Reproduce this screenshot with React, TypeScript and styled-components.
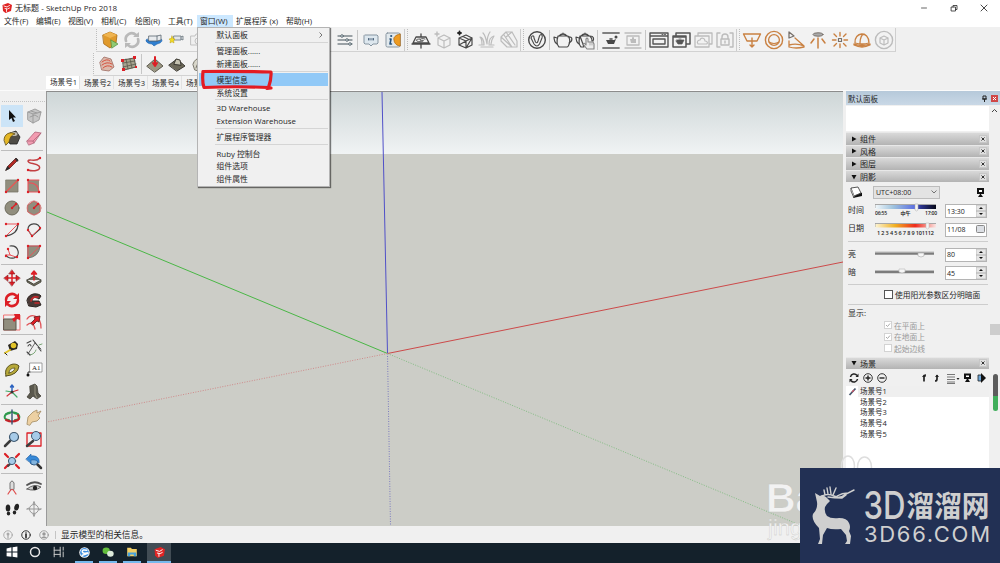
import React from "react";
import styled, { createGlobalStyle } from "styled-components";

const Global = createGlobalStyle`
  * { box-sizing: border-box; }
  html, body { margin: 0; padding: 0; }
  body { overflow: hidden; font-family: "Open Sans", "Noto Sans CJK SC", sans-serif; font-size: 7.85px; color: #262626; }
  svg { display: block; }
`;

const Window = styled.div`
  position: relative;
  width: 1000px;
  height: 563px;
  display: flex;
  flex-direction: column;
  background: #f0f0f0;
  overflow: hidden;
`;
const TitleBar = styled.header`
  height: 15px;
  background: #fff;
  display: flex;
  align-items: center;
  padding: 0 11px 0 2px;
  font-size: 8px;
  gap: 3px;
`;
const TitleText = styled.span`
  flex: 1;
  letter-spacing: 0.03px;
  white-space: nowrap;
`;
const Controls = styled.div`
  display: flex;
  gap: 20px;
`;
const MenuBar = styled.nav`
  height: 13px;
  background: linear-gradient(#fff 12px, #f0f0f0 12px);
  display: flex;
  padding-left: 1px;
`;
const MenuEntry = styled.span<{ $w: number; $open?: boolean }>`
  width: ${(p) => p.$w}px;
  flex: none;
  height: 12px;
  line-height: 13px;
  padding-left: 3px;
  white-space: nowrap;
  background: ${(p) => (p.$open ? "#cce8ff" : "transparent")};
`;
const ToolZone = styled.div`
  height: 48px;
  display: flex;
  flex-direction: column;
  align-items: flex-start;
`;
const ToolStrip = styled.div<{ $left: number; $w: number; $h: number }>`
  margin-left: ${(p) => p.$left}px;
  width: ${(p) => p.$w}px;
  height: ${(p) => p.$h}px;
  display: flex;
  align-items: center;
  border-right: 1px solid #cfcfcf;
  border-bottom: 1px solid #d2d2d2;
  background: #f2f2f2;
`;
const Slot = styled.span`
  width: 22px;
  height: 22px;
  flex: none;
  display: flex;
  align-items: center;
  justify-content: center;
`;
const Divider = styled.i`
  width: 4px;
  height: 20px;
  flex: none;
  background: linear-gradient(#c6c6c6, #c6c6c6) 1px 0 / 1px 100% no-repeat;
`;
const Grip = styled.i<{ $w: number; $edge?: boolean }>`
  width: ${(p) => p.$w}px;
  height: 22px;
  flex: none;
  border-left: ${(p) => (p.$edge ? "1px solid #cccccc" : "0")};
  background: repeating-linear-gradient(#bdbdbd 0 1px, transparent 1px 2px) ${(p) => (p.$edge ? 2 : 0)}px 0 / 1px 100% no-repeat;
`;
const Spacer = styled.i<{ $w: number }>`
  width: ${(p) => p.$w}px;
  flex: none;
`;
const SceneTabs = styled.div`
  height: 15px;
  display: flex;
  padding-left: 46px;
  border-bottom: 1px solid #fbfbfb;
`;
const SceneTab = styled.span<{ $on?: boolean }>`
  width: 34px;
  height: 13px;
  padding: ${(p) => (p.$on ? 0 : 1)}px 0 0 4px;
  line-height: 12px;
  font-size: 7.6px;
  white-space: nowrap;
  border-right: 1px solid #e2e2e2;
  background: ${(p) => (p.$on ? "#fff" : "#f3f3f3")};
`;
const Body = styled.main`
  height: 435px;
  display: flex;
`;
const Palette = styled.aside`
  width: 46px;
  padding: 10px 0 0 1px;
  display: flex;
  flex-direction: column;
`;
const PaletteGrip = styled.i`
  height: 4px;
  margin: 0 1px;
  background: repeating-linear-gradient(90deg, #c4c4c4 0 1px, transparent 1px 2px) 0 0 / 100% 1px no-repeat;
`;
const PaletteGroup = styled.div`
  display: grid;
  grid-template-columns: 22px 22px;
  border-bottom: 1px solid #bdbdbd;
  padding-bottom: 1px;
  margin-bottom: 2px;
  width: 42px;
  &:nth-child(5) { margin-bottom: 1px; }
  &:last-child { border-bottom: 0; }
`;
const PaletteTool = styled.span<{ $on?: boolean }>`
  height: 22px;
  width: 22px;
  display: flex;
  align-items: center;
  justify-content: center;
  background: ${(p) => (p.$on ? "#cce4f7" : "transparent")};
`;
const Viewport = styled.section`
  width: 797px;
  height: 435px;
  border-left: 1px solid #9a9a9a;
  border-top: 1px solid #8c8c8c;
  overflow: hidden;
  background: linear-gradient(#ced6d7, #f0f3f4 62px, #cccdc7 62px);
`;
const Tray = styled.aside`
  width: 146px;
  padding-left: 3px;
  display: flex;
  flex-direction: column;
`;
const TrayTitle = styled.div`
  height: 14px;
  width: 154px;
  display: flex;
  align-items: center;
  padding: 0 2px;
  gap: 4px;
  background: linear-gradient(#b6c9da, #c9d8e6);
  font-size: 7.5px;
`;
const Fill = styled.span`
  flex: 1;
`;
const BlankBox = styled.div`
  height: 25px;
  margin: 1px 0;
  background: #fff;
`;
const Section = styled.div`
  height: 12.6px;
  flex: none;
  display: flex;
  align-items: center;
  padding: 0 2px 0 5px;
  font-size: 8px;
  background: linear-gradient(#d9d9d9, #b3b3b3);
  border-top: 1px solid #e8e8e8;
`;
const Arrow = styled.span<{ $open?: boolean }>`
  width: 9px;
  svg { transform: rotate(${(p) => (p.$open ? 90 : 0)}deg); }
`;
const CloseBox = styled.span`
  width: 8px;
  height: 8px;
  background: #e0e0e0;
  border: 1px solid #c7c7c7;
  display: flex;
  align-items: center;
  justify-content: center;
`;
const Row = styled.div<{ $h: number; $line?: boolean }>`
  height: ${(p) => p.$h}px;
  flex: none;
  margin: 0 1px 0 2px;
  display: flex;
  align-items: center;
  font-size: 8px;
  border-bottom: ${(p) => (p.$line ? "1px solid #cdcdcd" : "0")};
`;
const RowLabel = styled.span<{ $w: number; $lift?: number }>`
  width: ${(p) => p.$w}px;
  padding-bottom: ${(p) => p.$lift ?? 0}px;
  flex: none;
  white-space: nowrap;
`;
const Select = styled.span`
  width: 67px;
  height: 13px;
  background: #e3e3e3;
  border: 1px solid #bcbcbc;
  display: flex;
  align-items: center;
  justify-content: space-between;
  padding: 0 2px;
  font-size: 7px;
`;
const Slider = styled.div<{ $lift?: number }>`
  width: 70px;
  padding-bottom: ${(p) => p.$lift ?? 0}px;
  flex: none;
`;
const Field = styled.span`
  width: 42px;
  height: 14px;
  flex: none;
  background: #fff;
  border: 1px solid #b4b4b4;
  display: flex;
  align-items: center;
  justify-content: space-between;
  padding-left: 1px;
  font-size: 7px;
  color: #1a1a1a;
`;
const Check = styled.span<{ $dim?: boolean }>`
  width: ${(p) => (p.$dim ? 8 : 9)}px;
  height: ${(p) => (p.$dim ? 8 : 9)}px;
  margin: 0 2px 0 36px;
  flex: none;
  background: #fff;
  border: 1px solid ${(p) => (p.$dim ? "#d3d3d3" : "#555")};
`;
const CheckText = styled.span<{ $dim?: boolean }>`
  color: ${(p) => (p.$dim ? "#9a9a9a" : "#262626")};
  font-size: 7.75px;
  white-space: nowrap;
`;
const SceneList = styled.div`
  flex: 1;
  background: #fff;
`;
const SceneItem = styled.div<{ $on?: boolean }>`
  height: 10.85px;
  margin-left: 12px;
  padding-left: 2px;
  line-height: 10.8px;
  font-size: 7.5px;
  background: ${(p) => (p.$on ? "#efefef" : "#fff")};
  position: relative;
  svg { position: absolute; left: -10px; top: 1px; }
`;
const ScrollRail = styled.div`
  width: 11px;
  padding-top: 14px;
  display: flex;
  flex-direction: column;
  align-items: center;
`;
const ScrollThumb = styled.i`
  width: 10px;
  height: 11px;
  background: #cdcdcd;
  margin-top: 207px;
`;
const LevelPill = styled.i`
  width: 5px;
  height: 37px;
  margin: 39px 0 0 2px;
  border-radius: 3px;
  background: linear-gradient(#5c5c5c 22px, #3fae5a 22px);
`;
const StatusBar = styled.footer`
  height: 17px;
  display: flex;
  align-items: center;
  padding-left: 3px;
  gap: 8px;
`;
const StatusText = styled.span`
  border-left: 1px solid #c4c4c4;
  line-height: 8px;
  padding-left: 5px;
  margin-left: -2px;
  font-size: 8.7px;
`;
const TaskBar = styled.div`
  height: 20px;
  background: #14212b;
  display: flex;
`;
const Task = styled.span<{ $run?: boolean; $on?: boolean }>`
  width: ${(p) => (p.$on ? 24 : p.$run ? 18 : 23.5)}px;
  margin-right: ${(p) => (p.$run && !p.$on ? 6 : 0)}px;
  display: flex;
  align-items: center;
  justify-content: center;
  background: ${(p) => (p.$on ? "#414c54" : "transparent")};
  border-bottom: 2px solid ${(p) => (p.$run ? "#76b9ed" : "transparent")};
`;
const DropMenu = styled.div`
  position: absolute;
  left: 197px;
  top: 27px;
  width: 133px;
  height: 160px;
  background: #f0f0f0;
  border: 1px solid #b4b4b4;
  box-shadow: 1px 1px 1px rgba(0, 0, 0, 0.5);
  padding: 0.4px 1px 0;
`;
const MenuRow = styled.div<{ $hot?: boolean }>`
  height: 12.5px;
  padding: 0 5px 0 17.5px;
  display: flex;
  align-items: center;
  justify-content: space-between;
  white-space: nowrap;
  background: ${(p) => (p.$hot ? "#91c9f7" : "transparent")};
`;
const MenuRule = styled.div`
  height: 3.7px;
  margin: 0 0 0 16px;
  background: linear-gradient(#d5d5d5, #d5d5d5) 0 1px / 100% 1px no-repeat;
`;
const Marker = styled.svg`
  position: absolute;
  left: 196px;
  top: 66px;
`;
const Watermark = styled.svg`
  position: absolute;
  left: 760px;
  top: 450px;
`;
const Badge = styled.div`
  position: absolute;
  left: 800px;
  top: 468px;
  width: 200px;
  height: 95px;
  background: #223054;
`;

/* Every drawing uses a 20x20 field centred on the origin. */
const Ico = ({ children, s = 20 }: { children: React.ReactNode; s?: number }) => (
  <svg width={s} height={s} viewBox="-10 -10 20 20" fill="none" strokeLinecap="round" strokeLinejoin="round">
    {children}
  </svg>
);

const dark = "#484848";
const mute = "#bcbcbc";
const org = "#c98142";
const red = "#dc1f26";
const taupe = "#918e7e";

const SketchLogo = ({ s = 10 }: { s?: number }) => (
  <Ico s={s}>
    <path d="M-9-6 2-10 10-6 8 6-3 10-8 6Z" fill="#e02424" />
    <path d="M-6-4 0-2 5-5M-4 1 1 2 5 0M-1 2V7" stroke="#fff" strokeWidth="1.700" />
  </Ico>
);

const strip = {
  box: <><path d="M-7-5 0-8 7-5 6 3 0 8-6 4Z" fill="#e09a2c" stroke="#a8680f" strokeWidth=".8" /><path d="M-7-5 0-2 7-5 0-8Z" fill="#efb450" /><path d="M1 0 8 4 2 8Z" fill="#8fca74" stroke="#4d8f3d" strokeWidth=".7" /></>,
  refresh: <><path d="M-6 1A6 6 0 0 1 4-5M6-1A6 6 0 0 1-4 5" stroke="#b9b9b9" strokeWidth="2.600" /><path d="M1-3H7V-8ZM-1 3H-7V8Z" fill="#b9b9b9" /></>,
  orbitCloud: <><path d="M-7-1C-10 1-6 4-2 4L0 6 3 4C8 3 9 0 7-1L4 1H-5Z" fill="#2f7fd0" stroke="#1f62aa" strokeWidth=".6" /><path d="M-5-4H3L7-5V0L3 1H-5Z" fill="#e8ebee" stroke="#59646e" strokeWidth=".8" /><path d="M3-4V1" stroke="#59646e" strokeWidth=".8" /></>,
  star: <><path d="M-2-4H5V0H-2ZM5-3 7-4V0L5-1" fill="#e3e6e9" stroke="#68737c" strokeWidth=".8" /><path d="M-4-4-3-1.500-1-1-2.400.6-2 3-4 1.800-6 3-5.600.6-7-1-5-1.500Z" fill="#f3dc22" stroke="#bb9c10" strokeWidth=".5" /></>,
  camera: <><path d="M-7-4H-3L-2-6H3L4-4H7V5H-7Z" fill="#f0f0f0" stroke="#c2c2c2" /><circle r="3" cy="1" stroke="#c2c2c2" /></>,
  sliders: <><path d="M-7-4H7M-7 0H7M-7 4H7" stroke="#7d878c" strokeWidth="1.300" /><g fill="#eef3f5" stroke="#55646c" strokeWidth=".9"><circle cx="-3" cy="-4" r="1.300" /><circle cx="2" cy="0" r="1.300" /><circle cx="5" cy="4" r="1.300" /></g></>,
  chat: <><path d="M-6-5H6L7-4V3L6 4H2L0 6-2 4H-6L-7 3V-4Z" fill="#dde7ee" stroke="#8695a1" /><path d="M-2.500-1.500V0M-1-1.500V0M1-1.500V0M2.500-1.500V0" stroke="#4e657c" strokeWidth="1" /></>,
  info: <><rect x="-7" y="-7" width="14" height="14" rx="1.500" fill="#e2e9ed" stroke="#8a97a2" /><path d="M7-6C2-5 0-2 1 0 1 3 4 6 7 6Z" fill="#ed9b22" stroke="#a9640b" strokeWidth=".7" /><path d="M-3-1H-2L-3 4H-1.500" stroke="#26527d" strokeWidth="1.600" /><circle cx="-1.800" cy="-4" r="1.100" fill="#26527d" /></>,
  plane: <><path d="M0-6V-3M0 4V8M-9 4H9M-5-3H5L8 3H-8Z" stroke={dark} strokeWidth="1.300" /><path d="M4-1C1-2-1-1-1 0S4 0 2 1-2 2-4 1-4-1-1-1" stroke={dark} strokeWidth=".9" /></>,
  cubePlus: <><path d="M-5-2 1-5 7-2V5L1 8-5 5ZM-5-2 1 1 7-2M1 1V8" stroke={mute} strokeWidth="1.200" /><path d="M-6-8V-4M-8-6H-4" stroke={mute} strokeWidth="1.400" /></>,
  cubeWire: <><path d="M-6-2 1-5 7-2V5L1 8-6 5ZM-6-2 1 1 7-2M1 1V8M-6 5 1 1M1 8 7-2M-2-3.500 4-.5" stroke={dark} strokeWidth="1.200" /><path d="M-5.500-8.500V-5.500M-7-7H-4" stroke="#222" strokeWidth="1.800" /></>,
  grass: <><path d="M-8 5H-3M2 5H7M-6 7H6M-3 5C-3 0-5-3-7-3-5-1-5 2-5 4M0 4C-1-2-3-6-4-7M0 4C0 0 0-4 3-8M2 4C2 0 4-3 7-4 5-1 4 1 4 4" stroke={mute} strokeWidth="1.200" /></>,
  clipBox: <><path d="M-8-3-3-8 3-8 8 1V7H3ZM-8-3V1L-2 7H3M-3-8 6 5M3-8-3-3M-5-5 3 7" stroke={mute} strokeWidth="1.200" /></>,
  vray: <><circle r="8.300" stroke={dark} strokeWidth="1.400" /><path d="M-6-2C-5-5-3-5-3-2L-1.500 2Q0 4 1 1L2.500-4C4-7 6-5 5-2L2.500 4Q0 8-3 4Z" stroke={dark} strokeWidth="1.100" /></>,
  teapot: <><path d="M-5-4H5C9 1 5 7 4 7H-4C-5 6-7 3-5-4ZM-6 4C-9 2-9-1-9-3L-6-2M5-3C10-4 10 1 6 3M-4-4Q0-8 4-4M0-6V-7" stroke={dark} strokeWidth="1.200" /></>,
  teapotHand: <><path d="M-5-4H5C7-2 7 0 7 1M-1 7H-4C-5 6-7 3-5-4ZM-6 4C-9 2-9-1-9-3L-6-2M5-4C9-4 9-1 8 1M-4-4Q0-8 4-4M0-6V-7" stroke={dark} strokeWidth="1.200" /><path d="M1 5V-1Q2-3 3-1V2H8L9 4V9H2L-2 4Q-1 2 1 5" fill="#ededed" stroke="#828282" strokeWidth="1.100" /><path d="M5 2V5M7 2V5" stroke="#999" strokeWidth=".8" /></>,
  render: <><path d="M-8-7H8M-8 8H8" stroke="#808080" strokeWidth="1.800" /><path d="M-4 0H3L5-1 3 4H-3L-5 0Z" fill={dark} /><circle cx="5" cy="-3" r="1.500" fill={dark} /><path d="M-1-1H1" stroke={dark} strokeWidth="1.600" /></>,
  renderWin: <><path d="M-8-7H8M-8 8H8" stroke={mute} strokeWidth="1.400" /><rect x="-6" y="-4" width="12" height="9" stroke={mute} strokeWidth="1.300" /><path d="M-3-1H3V3H-2Z" fill={mute} /><path d="M0-2V0" stroke={mute} strokeWidth="2" /></>,
  frame: <><path d="M-9-7H9V7H-9ZM-9-4H9M-6-1H6V4H-6Z" stroke="#565656" strokeWidth="1.400" /><path d="M3-5.500H8" stroke="#666" strokeDasharray="1 1.500" /></>,
  frames: <><path d="M-5-4V-7H9V4H6M-8-4H5V7H-8ZM-8-3H5" stroke="#565656" strokeWidth="1.500" /><path d="M-4 0H1L3 0 1 4H-3L-5 1ZM-2-1H0" fill="#555" stroke="#555" strokeWidth=".7" /></>,
  cloudFrame: <><path d="M-5-4V-7H9V4H6M-8-4H6V7H-8Z" stroke={mute} strokeWidth="1.300" /><path d="M-5 4C-7 1-4 0-3 0-2-3 2-2 2 1 5 1 5 4 3 4Z" stroke={mute} strokeWidth="1.200" /></>,
  lock: <><path d="M-5-7H-8V7H-5M5-7H8V7H5M-4-1H4V5H-4ZM-3-1V-3A3 3 0 0 1 3-3V-1M0 1V3" stroke={mute} strokeWidth="1.400" /></>,
  rectLight: <path d="M-8.500-6H8.500L5 1H-5ZM0-2V7M-2 5 0 7 2 5" stroke={org} strokeWidth="1.400" />,
  sphere: <><circle r="8.600" stroke={org} strokeWidth="1.400" /><circle r="5.400" stroke={org} strokeWidth="1.300" /><path d="M-5 2Q0 5 5 2" stroke={org} strokeWidth="1.200" /></>,
  spot: <><path d="M-7-8-2-4-7-2Z" stroke="#77706a" strokeWidth="1.300" /><path d="M-7 1V7Q0 9 8 7V6L-1-2M-7 5Q1 3 8 6" stroke={org} strokeWidth="1.300" /></>,
  ies: <><ellipse cy="-5.500" rx="5" ry="1.700" fill="#aaa" stroke="#77706a" /><path d="M0-2V8M-4-1-7 3M4-1 7 3" stroke={org} strokeWidth="1.500" /></>,
  omni: <><path d="M0-7.500V-4M0 4V7.500M-7.500 0H-4M4 0H7.500M-6-6-3.500-3.500M6-6 3.500-3.500M-6 6-3.500 3.500M6 6 3.500 3.500" stroke={org} strokeWidth="1.400" /><rect x="-1.500" y="-1.500" width="3" height="3" stroke="#77706a" strokeWidth="1.200" /></>,
  dome: <path d="M-7 3C-8-8 7-10 7 3Q0 5-7 3ZM-8 4Q0 7 8 4V5Q0 9-8 5ZM-2 3C-2-2 0-6 2-6" stroke={org} strokeWidth="1.300" />,
  meshLight: <><circle r="8.600" stroke={mute} strokeWidth="1.400" /><path d="M-4-2 0-4 4-2V3L0 5-4 3ZM-4-2 0 0 4-2M0 0V5" stroke={mute} strokeWidth="1.200" /></>,
};
const terrain = {
  contours: <><path d="M-7-2-3-7 4-5 7 3 2 7-5 6Z" fill="#dcb9ab" stroke="#9c6a5f" strokeWidth=".8" /><path d="M-5-2Q0-6 3-3M-5 1Q0-3 5 0M-4 4Q0 0 5 3" stroke="#d5523f" strokeWidth="1" /></>,
  grid: <><path d="M-6-4 5-6 7 3-5 6Z" fill="#a7a48f" stroke="#5b594e" /><path d="M-3-5-1 5M1-5 3 4M-6-1 6-3M-6 3 7 0" stroke="#5b594e" strokeWidth=".8" /><g fill={red}><path d="M-8-5H-5V-2H-8ZM4-8H7V-5H4ZM-7 4H-4V7H-7ZM6 2H8V4H6Z" /></g></>,
  smoove: <><path d="M-8 2 0-5 8 2 0 8Z" fill="#9b9782" stroke="#5c594d" /><path d="M0-7V1M-2-1 0 2 2-1" stroke={red} strokeWidth="2" /></>,
  stamp: <><path d="M-8 1 0-5 8 2 0 7Z" fill="#6d6959" stroke="#3d3b34" /><path d="M-3 0-1-5 3-4 4 1Z" fill="#c5c2b0" stroke="#3d3b34" /></>,
  drape: <><path d="M-6 0Q-4-6 2-6L6-3V4L0 7-4 6Z" fill="#d8d6ca" stroke="#777468" /><path d="M-3 4Q-2-2 3-3" stroke="#777468" /></>,
};

const S = (d: string, c = dark, w = 1.2) => <path d={d} stroke={c} strokeWidth={w} />;
const dots = (...p: number[][]) => p.map(([x, y], i) => <circle key={i} cx={x} cy={y} r="1.200" fill={red} />);

const palette: React.ReactNode[][] = [
  [
    <path d="M-3-6V4L-.5 2 1 6 3 5 1 1.500H4Z" fill="#111" />,
    <><path d="M-6-4 1-7 7-4 5 4-1 7-6 4Z" fill="#c6c6c6" stroke="#a0a0a0" /><path d="M-6-4-1-2 7-4M-1-2V7M-4 1 1-1 4 1M-3-5 3-3" stroke="#989898" strokeWidth=".9" /></>,
    <><path d="M-2-5 4-7 8-1 5 6-2 6-5 1Z" fill="#4f4c46" stroke="#222" strokeWidth=".8" /><ellipse cx="2" cy="-4" rx="3.500" ry="2" fill="#bdb9ac" /><path d="M-8 2C-8-4-2-7 3-4-1-3-2 0-3 4L-6 7Z" fill="#e4b625" stroke="#5a4a18" strokeWidth=".8" /></>,
    <><path d="M-7 3 1-6 7-5 0 5-5 7Z" fill="#f29bb0" stroke="#b06478" strokeWidth=".8" /><path d="M-7 3-1 3 0 5M-1 3 7-5" stroke="#b06478" strokeWidth=".8" /></>,
  ],
  [
    <><path d="M-6 6-4 2 4-6 6-4-2 4Z" fill="#b32a24" stroke="#4b1714" strokeWidth=".7" /><path d="M-7 7-4.500 2-2 4.500Z" fill="#2b2b2b" /><path d="M4-5 5.500-3.500" stroke="#333" strokeWidth="1.800" /></>,
    <>{S("M-6 6C0 8 8 6 5 2 2-1-6 0-6-3-5-6 1-1 6-6", "#c23f42", 1.500)}{dots([6, -6], [-6, 6])}</>,
    <><rect x="-6" y="-6" width="12" height="12" fill={taupe} stroke="#7a7768" strokeWidth=".8" />{S("M-6 6 6-6", "#ef5350", 1.100)}{dots([-6, 6], [6, -6])}</>,
    <><path d="M-6-6H5V6H-6Z" fill={taupe} />{S("M-6 6V-6H5M-6-3Q4-4 5 6H-6", "#e9545a", 1.100)}{dots([-6, -6], [5, 6], [-6, 6])}</>,
    <><circle r="7" fill={taupe} stroke="#676456" strokeWidth=".9" />{S("M0 0 4-4", red, 1.200)}{dots([0, 0], [4, -4])}</>,
    <><path d="M-6-3 0-7 6-3V4L0 7-6 4Z" fill={taupe} stroke="#c65a58" /><circle r="7" stroke="#cf7371" strokeWidth=".7" />{S("M0 0 4-4", red, 1.200)}{dots([0, 0], [4, -4])}</>,
    <>{S("M6-6Q6 4-6 6", "#444")}{S("M-6-6H6L-6 6", "#e9545a", 1)}{dots([6, -6], [-6, 6], [-6, -6])}</>,
    <>{S("M-6 0C-7-8 6-8 6-1L-2 6Z", "#444")}{S("M-6 0-2 6 6-2", "#e9545a", 1)}{dots([-6, 0], [-2, 6], [6, -2])}</>,
    <>{S("M-2-6C7-7 9 4 2 6-3 7-6 4-6 3", "#444")}{S("M-4-3-2 3 4 5M-6 3-2 3", "#e9545a", 1)}{dots([-4, -3], [-6, 4], [5, 5])}</>,
    <><path d="M-6-6H6Q5 5-6 6Z" fill={taupe} stroke="#666" strokeWidth=".8" />{S("M-6 6V-6H6L-6 6", "#e9545a", .9)}{dots([-6, -6], [6, -6], [-6, 6])}</>,
  ],
  [
    <>{S("M0-5V5M-5 0H5", red, 1.500)}<path d="M0-8 3-4H-3ZM0 8 3 4H-3ZM-8 0-4-3V3ZM8 0 4-3V3Z" fill={red} stroke="#7b1216" strokeWidth=".5" /></>,
    <><path d="M-7 2 0-2 7 2 0 6ZM-7 2V4L0 8 7 4V2" fill="#716e5e" stroke="#3e3c33" strokeWidth=".8" /><path d="M0 2V-4M0-7-2.500-4H2.500Z" fill={red} stroke={red} strokeWidth="1.500" /></>,
    <><path d="M-6 0A6 6 0 0 1 4-4.500M6 0A6 6 0 0 1-4 4.500" stroke={red} strokeWidth="2.500" /><path d="M7-7V-1H1ZM-7 7V1H-1Z" fill={red} /></>,
    <><path d="M-7 0C-5-8 5-7 7-4L5-1C0-4-2-2-2 1L5 1 7 5 2 7-5 6Z" fill="#4a3936" stroke="#2d2522" />{S("M-3 1Q-2-4 4-3M1 3 5 3", "#c3282c", 1.600)}</>,
    <><path d="M-8-7H8V8H-8Z" stroke="#f07272" /><path d="M-8-3H4V8H-8Z" fill={taupe} stroke="#58564b" /><path d="M2 0 0-3 3-5 2-8 8-8 8-2 5-3Z" fill={red} /></>,
    <>{S("M-7-3C-3-9 7-7 7 6M-7 3Q-1-2 1 7", "#e0575b", 1.300)}<path d="M-3 1 1-3 0-5 6-6 5 0 3-1-1 3Z" fill={red} stroke="#5d1517" strokeWidth=".8" /></>,
  ],
  [
    <><path d="M-4-3 3-7 6-4 5 1-2 3Z" fill="#29261e" /><circle cx="1.500" cy="-2.500" r="2.800" fill="#e2c42a" /><path d="M-2 2-7 5" stroke="#e2c42a" strokeWidth="2" /><path d="M-7 5-5 7" stroke="#222" /></>,
    <>{S("M-6 6 1-5M1-5 7 1", "#666", 1)}{S("M-4 7Q1 6 2 2M5-3 8-4", "#7ba778", 1)}<path d="M-7-5-3-7M-6-2Q-4-5-3-2M-1-8 3-3M4-1 7 3M-7 4-4 7" stroke="#444" strokeWidth="1.100" /></>,
    <><path d="M-6 6C-9-4 2-9 7-4Q6 5-6 6Z" fill="#b6a83a" stroke="#57501e" /><path d="M-3 3Q-3-2 3-2Q2 2-3 3Z" fill="#f0f0f0" stroke="#57501e" strokeWidth=".8" /></>,
    <><rect x="-4" y="-7" width="12" height="9" fill="#fff" stroke="#888" strokeWidth=".8" /><text x="-2" y="0" fontSize="7" fontFamily="Liberation Serif, serif" fill="#222">A1</text><path d="M-4 2H-6V5" stroke="#333" /><circle cx="-6" cy="5" r="1.500" fill="#111" /></>,
    <>{S("M0 0V-6M-1.500-5 0-7 1.500-5", "#2b62c0", 1.400)}{S("M0 0 6-2M0 0-5 4", "#cf3336", 1.200)}{S("M-6-1 0 0M1 1 5 5", "#44a866", 1.200)}<circle r="1.500" fill="#333" /></>,
    <><path d="M-4-6 1-8 3-6 4 1 7 4 3 7-1 4-4 7-7 5-4 1Z" fill="#5b594e" stroke="#45433a" strokeWidth=".8" /><path d="M1-7V2L3 6" stroke="#8b8877" strokeWidth="1.200" /></>,
  ],
  [
    <>{S("M-2-4C-9-3-9 3-3 3M2-4C9-3 9 3 3 3", "#2f9a4d", 2)}{S("M-6-3Q0-7 6-3", "#2f9a4d", 1.600)}{S("M-6 3Q0 6 6 3M6-2 7 2", "#c32329", 2)}{S("M0-7V7", "#31506f", 1.400)}</>,
    <path d="M-7 7-6 0-1-5 3-7 3-4 7-6 4-1 6 1 3 4-2 5-4 8Z" fill="#edd0a2" stroke="#a28a60" strokeWidth=".8" />,
    <><path d="M-7 7-2 2" stroke="#3c3c3c" strokeWidth="2.500" /><circle cx="2" cy="-2" r="4.500" fill="#a7cbe9" stroke="#3f5870" strokeWidth="1.200" /></>,
    <><rect x="-7" y="-6" width="14" height="13" stroke={red} strokeWidth="1.300" /><path d="M-7 7-1 2" stroke="#3c3c3c" strokeWidth="2.500" /><circle cx="2" cy="-3" r="4.500" fill="#a7cbe9" stroke="#3f5870" /></>,
    <><path d="M-7-7-4-4M7-7 4-4M-7 7-4 4M7 7 4 4" stroke={red} strokeWidth="2.200" /><path d="M-4 5 0 1" stroke="#444" strokeWidth="2" /><circle r="3.600" fill="#a7cbe9" stroke="#3f5870" /></>,
    <><path d="M3 3 7 7" stroke="#333" strokeWidth="2.500" /><circle cx="0" r="4" fill="#82b4de" stroke="#315a84" /><path d="M-8-2-3-7V-5C3-6 6-2 5 2 2-2 0-1-3-1V2Z" fill="#3789d8" stroke="#1d5b9e" strokeWidth=".6" /></>,
  ],
  [
    <><path d="M-2 2V-4Q0-8 2-4V2Z" fill="#ddd" stroke="#777" />{S("M-2 4-4 7M2 4 4 7M-2 4Q0 1 2 4", "#df4d4c", 1.200)}</>,
    <><path d="M-7-2Q0-7 7-3" stroke="#555" strokeWidth="1.800" /><path d="M-7 2Q0-4 7 0 1 5-7 2Z" fill="#ccc" stroke="#444" strokeWidth=".8" /><circle cx="1" cy="1" r="2.200" fill="#222" /></>,
    <><ellipse cx="-4" cy="-1" rx="2.300" ry="3.500" fill="#222" /><ellipse cx="-3.500" cy="4.500" rx="1.700" ry="2" fill="#222" /><ellipse cx="4" cy="-3" rx="2.300" ry="3.500" fill="#222" transform="rotate(15)" /><ellipse cx="2.500" cy="3.500" rx="1.700" ry="2" fill="#222" /></>,
    <>{S("M0-7V7M-7 0H7M0-7-1-5M0-7 1-5M0 7-1 5M0 7 1 5M-7 0-5-1M7 0 5 1", "#999", 1)}<circle r="4.500" stroke="#999" /></>,
  ],
];

const CloseX = () => <svg width="4" height="4" viewBox="0 0 4 4"><path d="M.5.5 3.500 3.500M3.500.5.5 3.500" stroke="#333" /></svg>;
const Tri = () => <svg width="6" height="6" viewBox="0 0 6 6"><path d="M1 .5 5.500 3 1 5.500Z" fill="#111" /></svg>;
const Head = ({ name, open }: { name: string; open?: boolean }) => (
  <Section><Arrow $open={open}><Tri /></Arrow>{name}<Fill /><CloseBox><CloseX /></CloseBox></Section>
);
const Spin = () => (
  <svg width="10" height="12" viewBox="0 0 10 12"><path d="M0 0H10V12H0Z" fill="#e6e6e6" stroke="#c0c0c0" /><path d="M0 6H10" stroke="#b0b0b0" /><path d="M3 4 5 2 7 4ZM3 8 5 10 7 8Z" fill="#111" /></svg>
);
const Menu = [
  ["默认面板"], ["管理面板......", "新建面板......"], ["模型信息", "系统设置"],
  ["3D Warehouse", "Extension Warehouse"], ["扩展程序管理器"], ["Ruby 控制台", "组件选项", "组件属性"],
];
const entries: [string, number][] = [
  ["文件(F)", 32], ["编辑(E)", 32], ["视图(V)", 33], ["相机(C)", 34], ["绘图(R)", 33], ["工具(T)", 32], ["窗口(W)", 36], ["扩展程序 (x)", 50], ["帮助(H)", 40],
];
const Icons = ({ list }: { list: React.ReactNode[] }) => <>{list.map((n, i) => <Slot key={i}><Ico>{n}</Ico></Slot>)}</>;

const MonitorGlyph = () => (
  <svg width="9" height="9" viewBox="0 0 9 9"><path d="M1 0H8V6H1Z" fill="#111" /><path d="M3 2H6V4H3Z" fill="#fff" /><path d="M4.500 5.500 7 9H2Z" fill="#111" /></svg>
);

export default function App() {
  const t = strip;
  return (
    <Window>
      <Global />
      <TitleBar>
        <SketchLogo />
        <TitleText>无标题 - SketchUp Pro 2018</TitleText>
        <Controls>
          <Ico s={10}><path d="M-5 0H5" stroke="#333" strokeWidth="1.500" /></Ico>
          <Ico s={10}><path d="M-5-2H3V6H-5ZM-2-2V-5H6V3H3" stroke="#333" strokeWidth="1.700" /></Ico>
          <Ico s={10}><path d="M-6-6 6 6M6-6-6 6" stroke="#333" strokeWidth="1.800" /></Ico>
        </Controls>
      </TitleBar>
      <MenuBar>
        {entries.map(([n, w]) => <MenuEntry key={n} $w={w} $open={n === "窗口(W)"}>{n}</MenuEntry>)}
      </MenuBar>
      <ToolZone>
        <ToolStrip $left={96} $w={800} $h={24}>
          <Grip $w={3} />
          <Icons list={[t.box, t.refresh, t.orbitCloud, t.star, t.camera]} />
          <Spacer $w={125} />
          <Icons list={[t.sliders]} /><Divider />
          <Icons list={[t.chat, t.info]} /><Grip $w={6} $edge />
          <Icons list={[t.plane, t.cubePlus, t.cubeWire, t.grass, t.clipBox]} /><Grip $w={6} $edge />
          <Icons list={[t.vray]} /><Divider />
          <Icons list={[t.teapot, t.teapotHand]} /><Divider />
          <Icons list={[t.render, t.renderWin]} /><Divider />
          <Icons list={[t.frame, t.frames, t.cloudFrame, t.lock]} /><Grip $w={5} $edge />
          <Icons list={[t.rectLight, t.sphere, t.spot, t.ies, t.omni, t.dome, t.meshLight]} />
        </ToolStrip>
        <ToolStrip $left={93} $w={230} $h={24}>
          <Grip $w={3} />
          <Icons list={[terrain.contours, terrain.grid]} /><Divider />
          <Icons list={[terrain.smoove, terrain.stamp, terrain.drape]} />
        </ToolStrip>
      </ToolZone>
      <SceneTabs>
        {[1, 2, 3, 4, 5].map((n) => <SceneTab key={n} $on={n === 1}>场景号{n}</SceneTab>)}
      </SceneTabs>
      <Body>
        <Palette>
          <PaletteGrip />
          {palette.map((g, i) => (
            <PaletteGroup key={i}>
              {g.map((n, j) => <PaletteTool key={j} $on={i + j === 0}><Ico>{n}</Ico></PaletteTool>)}
            </PaletteGroup>
          ))}
        </Palette>
        <Viewport>
          <svg width="796" height="434" viewBox="47 92 796 434" fill="none">
            <path d="M387.500 353.500 382 92" stroke="#5050c8" />
            <path d="M387.500 353.500 47 212" stroke="#4ab746" />
            <path d="M387.500 353.500 843 262" stroke="#cc4a4a" />
            <path d="M387.500 353.500 390.500 526" stroke="#7c7cc0" strokeDasharray="1 1.500" />
            <path d="M387.500 353.500 843 543" stroke="#83bd83" strokeDasharray="1 1.500" />
            <path d="M387.500 353.500 47 422" stroke="#cf8a8a" strokeDasharray="1 1.500" />
          </svg>
        </Viewport>
        <Tray>
          <TrayTitle>
            默认面板<Fill />
            <svg width="5" height="7" viewBox="0 0 5 7"><path d="M1 1H4V4H1ZM0 4H5M2.500 4V7" stroke="#222" fill="none" /></svg>
            <svg width="7" height="7" viewBox="0 0 7 7"><path d="M0 0H7V7H0Z" fill="#d04848" /><path d="M2 2 5 5M5 2 2 5" stroke="#fff" /></svg>
          </TrayTitle>
          <BlankBox />
          <Head name="组件" /><Head name="风格" /><Head name="图层" /><Head name="阴影" open />
          <Row $h={20}>
            <RowLabel $w={25}>
              <svg width="15" height="15" viewBox="0 0 15 15"><path d="M5 13 14 11 14 8 10 7Z" fill="#111" /><path d="M3 3 10 2 13 8 6 11Z" fill="#fff" stroke="#444" strokeWidth=".9" /><path d="M3 3V6L6 13V11" fill="#ddd" stroke="#444" strokeWidth=".8" /></svg>
            </RowLabel>
            <Select>UTC+08:00<svg width="6" height="4" viewBox="0 0 6 4"><path d="M.5.5 3 3 5.500.5" stroke="#555" fill="none" strokeWidth=".8" /></svg></Select>
            <Fill /><MonitorGlyph /><Spacer $w={3} />
          </Row>
          <Row $h={18}>
            <RowLabel $w={27} $lift={4}>时间</RowLabel>
            <Slider $lift={3}>
              <svg width="66" height="14" viewBox="0 0 66 14" fontFamily="Open Sans, Noto Sans CJK SC, sans-serif" fontSize="5" fontWeight="600" fill="#222">
                <defs><linearGradient id="day"><stop offset="0" stopColor="#f3f8fa" /><stop offset=".3" stopColor="#9fc3de" /><stop offset=".65" stopColor="#5c6fe0" /><stop offset=".75" stopColor="#2d3590" /><stop offset="1" stopColor="#060818" /></linearGradient></defs>
                <rect y="2" width="61" height="4" fill="url(#day)" /><path d="M0 5V1.500H61" stroke="#888" strokeWidth=".7" fill="none" />
                <path d="M40 1H43V7L41.500 8 40 7Z" fill="#f4f4f4" stroke="#aaa" strokeWidth=".5" />
                <text x="0" y="12" textLength="12">06:55</text><text x="25.500" y="12" textLength="10">中午</text><text x="50" y="12" textLength="12">17:00</text>
              </svg>
            </Slider>
            <Field>13:30<Spin /></Field>
          </Row>
          <Row $h={19}>
            <RowLabel $w={27} $lift={4}>日期</RowLabel>
            <Slider $lift={2}>
              <svg width="66" height="14" viewBox="0 0 66 14" fontFamily="Open Sans, sans-serif" fontSize="5.500" fontWeight="600" fill="#222">
                <defs><linearGradient id="year"><stop offset="0" stopColor="#fdf6d8" /><stop offset=".33" stopColor="#f0b022" /><stop offset=".66" stopColor="#ee2a1c" /><stop offset="1" stopColor="#fbe5e3" /></linearGradient></defs>
                <rect y="2" width="61" height="3.500" fill="url(#year)" /><path d="M0 5V1.500H61" stroke="#888" strokeWidth=".7" fill="none" />
                <path d="M51 1H54V6L52.500 7 51 6Z" fill="#f4f4f4" stroke="#bbb" strokeWidth=".5" />
                <text x="2" y="12.500" textLength="57" lengthAdjust="spacing" xmlSpace="preserve">1 2 3 4 5 6 7 8 9 101112</text>
              </svg>
            </Slider>
            <Field>11/08<svg width="10" height="9" viewBox="0 0 10 9"><rect x=".5" y=".5" width="8" height="7" rx="1" fill="#dcdfe4" stroke="#888" /></svg></Field>
          </Row>
          <Row $h={3} $line />
          <Row $h={25}>
            <RowLabel $w={27} $lift={3}>亮</RowLabel>
            <Slider $lift={2}><svg width="60" height="8" viewBox="0 0 60 8"><path d="M0 3.500H59" stroke="#7c7c7c" strokeWidth="2.500" /><path d="M0 2H59" stroke="#bdbdbd" /><path d="M43 3H49V6L46 7 43 6Z" fill="#f6f6f6" stroke="#aaa" strokeWidth=".6" /></svg></Slider>
            <Field>80<Spin /></Field>
          </Row>
          <Row $h={12}>
            <RowLabel $w={27} $lift={3}>暗</RowLabel>
            <Slider $lift={3}><svg width="60" height="8" viewBox="0 0 60 8"><path d="M0 4H59" stroke="#7c7c7c" strokeWidth="2.500" /><path d="M0 2.500H59" stroke="#bdbdbd" /><path d="M24 1H30V4L27 5 24 4Z" fill="#f6f6f6" stroke="#bbb" strokeWidth=".6" /></svg></Slider>
            <Field>45<Spin /></Field>
          </Row>
          <Row $h={6} $line />
          <Row $h={20} $line><Check /><CheckText>使用阳光参数区分明暗面</CheckText></Row>
          <Row $h={14}>显示:</Row>
          {["在平面上", "在地面上", "起始边线"].map((n, i) => (
            <Row $h={11.6} key={n}>
              <Check $dim>{i < 2 && <svg width="6" height="6" viewBox="0 0 6 6"><path d="M1 3 2.500 4.500 5 1.500" stroke="#aaa" fill="none" /></svg>}</Check>
              <CheckText $dim>{n}</CheckText>
            </Row>
          ))}
          <Row $h={2.5} />
          <Head name="场景" open />
          <Row $h={16.5}>
            <svg width="139" height="14" viewBox="848 371 139 14" fill="none" stroke="#222">
              <path d="M850.500 377A3.600 3.600 0 0 1 857 375.500M857.500 379A3.600 3.600 0 0 1 851 380.500" strokeWidth="1.500" />
              <path d="M858.500 373.500V377H855.500ZM849.500 382.500V379H852.500Z" fill="#222" stroke="none" />
              <circle cx="868" cy="378" r="4.300" strokeWidth=".9" /><path d="M865.500 378H870.500M868 375.500V380.500" strokeWidth="1.400" />
              <circle cx="882" cy="378" r="4.300" strokeWidth=".9" /><path d="M879.500 378H884.500" strokeWidth="1.400" />
              <path d="M924 381.500V377Q924 375 926 375M937 375V379Q937 381 935 381" strokeWidth="1.700" /><path d="M922 377H926L924 374.500ZM935 377H939L937 374.500Z" fill="#222" stroke="none" />
              <path d="M947 374.500H955M947 377H955M947 379.500H955M947 382H955M947 383.500H955" stroke="#777" strokeWidth="1.200" />
              <path d="M956.500 378H959.500L958 380Z" fill="#222" stroke="none" />
              <path d="M964 373.500H971V379H964ZM967.500 378 970 382H965Z" fill="#111" stroke="none" /><path d="M966 375.500H969V377H966Z" fill="#fff" stroke="none" />
              <path d="M978 375H982V381H978Z" fill="#6fa7d8" strokeWidth=".8" /><path d="M981 373 986 378 981 383Z" fill="#111" stroke="none" />
            </svg>
          </Row>
          <SceneList>
            {[1, 2, 3, 4, 5].map((n) => (
              <SceneItem key={n} $on={n === 1}>
                {n === 1 && <svg width="9" height="9" viewBox="0 0 9 9"><path d="M1.500 8 7.500 1.500" stroke="#47596e" strokeWidth="1.800" /><path d="M4 5 6 3" stroke="#c65063" strokeWidth="1.200" /></svg>}
                场景号{n}
              </SceneItem>
            ))}
          </SceneList>
        </Tray>
        <ScrollRail>
          <svg width="7" height="12" viewBox="0 0 7 12"><path d="M1 7 3.500 4.500 6 7" stroke="#444" fill="none" /></svg>
          <ScrollThumb />
          <LevelPill />
        </ScrollRail>
      </Body>
      <StatusBar>
        <Ico s={10}><circle r="8.500" stroke="#999" strokeWidth="1.500" /><circle cy="-2" r="3" fill="#aaa" /><path d="M0 0V6" stroke="#aaa" strokeWidth="2.500" /></Ico>
        <Ico s={10}><circle r="8.500" stroke="#222" strokeWidth="1.800" /><circle cy="-4" r="1.600" fill="#222" /><path d="M0-1V5" stroke="#222" strokeWidth="3.200" /></Ico>
        <Ico s={10}><circle r="8.500" stroke="#888" strokeWidth="1.500" /><circle cy="-2" r="3.500" fill="#999" /><path d="M-6 6Q0-1 6 6Z" fill="#999" /></Ico>
        <StatusText>显示模型的相关信息。</StatusText>
      </StatusBar>
      <TaskBar>
        <Task><Ico s={12}><path d="M-9-6-1-8V-1H-9ZM1-8 9-9V-1H1ZM-9 1H-1V8L-9 7ZM1 1H9V9L1 8Z" fill="#fff" /></Ico></Task>
        <Task><Ico s={12}><circle r="7.500" stroke="#e8e8e8" strokeWidth="2.500" /></Ico></Task>
        <Task><Ico s={12}><path d="M-8-8V8M2-8V8M-8-3H2M-8 4H2M7-8V-3M7 0V8" stroke="#ccc" strokeWidth="1.600" /></Ico></Task>
        <Spacer $w={4.5} />
        <Task $run><Ico s={11}><circle r="9.500" fill="#fff" /><circle r="8" fill="#3b8de0" /><path d="M4-4Q-4-6-4-2T4 1-4 5" stroke="#fff" strokeWidth="2.800" /></Ico></Task>
        <Task $run><Ico s={12}><ellipse cx="-3" cy="-2" rx="6" ry="5.500" fill="#62bd3c" /><ellipse cx="4" cy="3" rx="5.500" ry="5" fill="#ddeadb" /></Ico></Task>
        <Task $run><Ico s={12}><path d="M-8-7H-2L0-5H8V7H-8Z" fill="#f2cf66" /><path d="M-7 1H7V7H3V4H-3V7H-7Z" fill="#47a2dc" /></Ico></Task>
        <Task $run $on><SketchLogo s={11} /></Task>
      </TaskBar>

      <DropMenu>
        {Menu.map((group, i) => (
          <React.Fragment key={i}>
            {i > 0 && <MenuRule />}
            {group.map((n) => (
              <MenuRow key={n} $hot={n === "模型信息"}>
                {n}
                {i === 0 && <svg width="4" height="6" viewBox="0 0 4 6"><path d="M.5.5 3 3 .5 5.500" stroke="#555" fill="none" strokeWidth=".8" /></svg>}
              </MenuRow>
            ))}
          </React.Fragment>
        ))}
      </DropMenu>
      <Marker width="80" height="28" viewBox="196 66 80 28" fill="none">
        <path d="M203 71.500Q235 71 271 72 271.500 79 268.500 87.500 235 86 204 87.500 202 82 203 71.500M267 88.500 271 88" stroke="#e31b23" strokeWidth="3.200" strokeLinecap="round" strokeLinejoin="round" />
      </Marker>

      <Watermark width="120" height="95" viewBox="760 450 120 95" fontFamily="Liberation Sans, sans-serif" fill="#f2f2f2" stroke="#c4c4c0" strokeWidth=".5">
        <text x="766" y="511.500" fontSize="41" fontWeight="700">Ba</text>
        <text x="768" y="535" fontSize="22" strokeWidth=".3">jing</text>
        <g fill="none" stroke="#dedede" strokeWidth="1.500"><ellipse cx="848" cy="466" rx="6.500" ry="10" /><ellipse cx="864.500" cy="467" rx="7" ry="10" /></g>
      </Watermark>
      <Badge>
        <svg width="200" height="95" viewBox="0 0 200 95" fill="#cfcfcf">
          <path d="M15 25 20 28Q22 26 26 29L30 33 27 36 25 39Q24 44 27 48 31 51 39 50 47 50 49 55 51 59 49 63L51 68 50 76H45L47 73 46 67 41 61Q32 62 27 60L23 67 22 76H18L20 71 19 60Q11 52 13 46 18 41 17 34Z" />
          <g fill="none" stroke="#cfcfcf" strokeWidth="1.400" strokeLinecap="round"><path d="M22 28Q28 25 34 28T46 26L54 22M25 27 24 22M28 26 27 20M31 26 30 19M33 27 36 20M37 28Q42 25 48 25M28 29Q34 30 42 30L46 27" /></g>
          <g fontFamily="Inter, sans-serif">
            <text x="63.500" y="51" fontSize="38" fontWeight="500" textLength="42" lengthAdjust="spacingAndGlyphs">3D</text>
            <text x="106.500" y="48.500" fontSize="29" fontWeight="600" fontFamily="Noto Sans CJK SC, sans-serif" textLength="83" lengthAdjust="spacingAndGlyphs">溜溜网</text>
            <text x="64" y="73.500" fontSize="22" fontWeight="400" textLength="126" lengthAdjust="spacing">3D66.COM</text>
          </g>
        </svg>
      </Badge>
    </Window>
  );
}
